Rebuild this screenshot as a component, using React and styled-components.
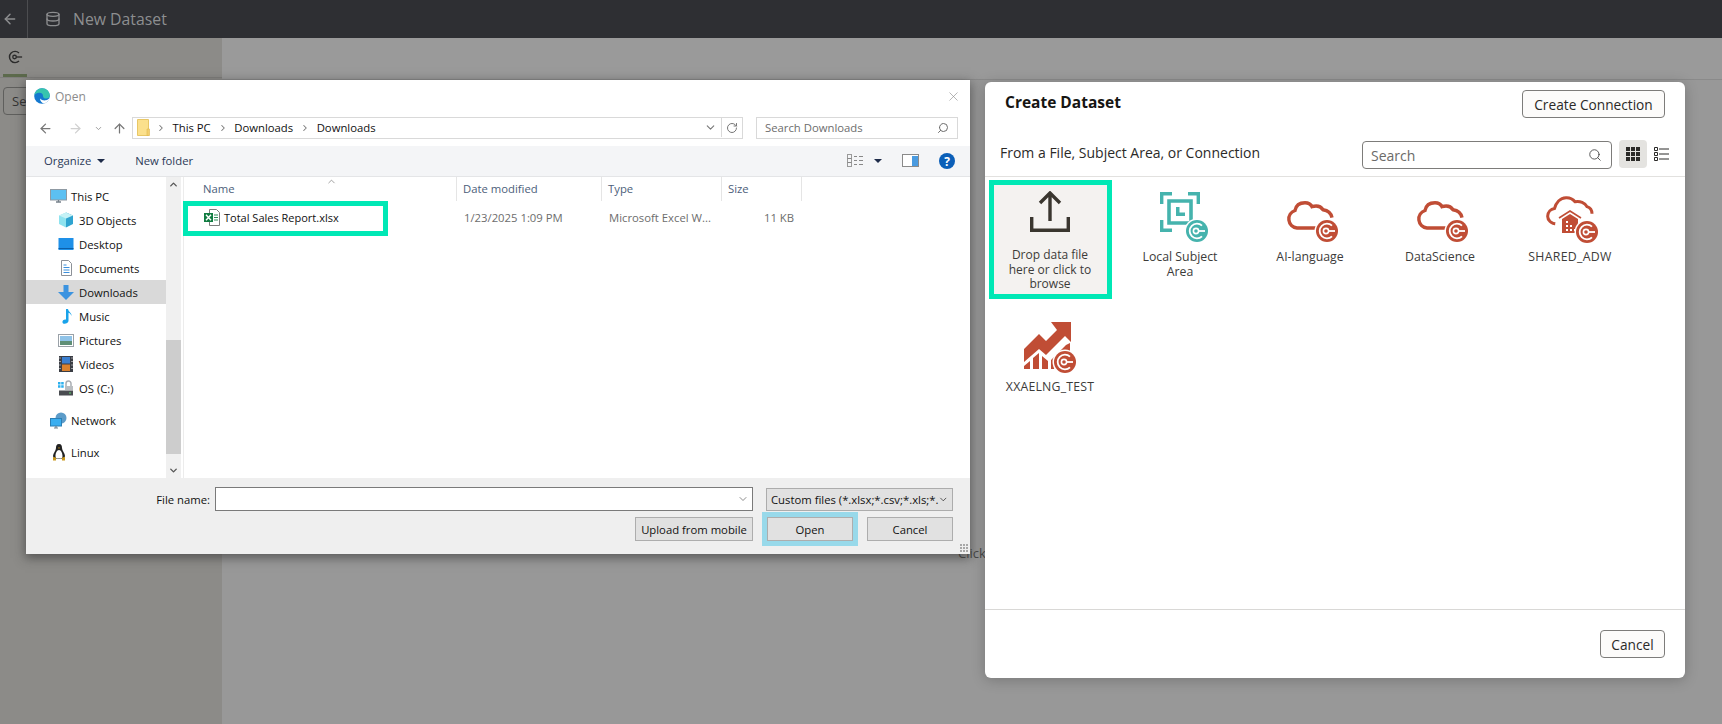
import React from "react";
import styled, { createGlobalStyle } from "styled-components";
import { ArrowLeft, Database, Search, ChevronDown, ChevronUp, ChevronRight, ArrowRight, ArrowUp, RotateCw, X } from "lucide-react";

const GlobalStyle = createGlobalStyle`
  html, body { margin: 0; padding: 0; height: 100%; }
  body { background: #989898; font-family: "Open Sans", "Liberation Sans", sans-serif; overflow: hidden; }
`;

const Page = styled.div`
  position: relative;
  width: 1722px;
  height: 724px;
  overflow: hidden;
  display: flex;
  flex-direction: column;
`;

/* app behind the dim layer */
const TopBar = styled.header`
  height: 38px;
  background: #2e2f33;
  display: flex;
  align-items: center;
  color: #8d8e90;
`;

const BackCell = styled.div`
  width: 28px;
  height: 38px;
  box-sizing: border-box;
  padding-right: 7px;
  border-right: 1px solid #4c4d50;
  display: flex;
  align-items: center;
  justify-content: center;
`;

const TopTitle = styled.div`
  display: flex;
  align-items: center;
  gap: 12px;
  margin-left: 17px;
  font-size: 15.8px;
`;

const Body = styled.div`
  flex: 1;
  display: flex;
`;

const LeftPane = styled.aside`
  width: 222px;
  box-sizing: border-box;
  background: #8c8b88;
`;

const TabStrip = styled.div`
  padding-left: 3px;
  border-bottom: 1px solid #7f7e7c;
`;

const TabCell = styled.div`
  width: 24px;
  height: 39px;
  border-bottom: 3px solid #5c6a4c;
  display: flex;
  align-items: center;
  justify-content: center;
  color: #2b2b2b;
  padding-top: 1px;
  box-sizing: border-box;
`;

const SearchStub = styled.div`
  margin: 9px 0 0 3px;
  width: 60px;
  height: 28px;
  border: 1px solid #5f5f5d;
  border-radius: 4px;
  box-sizing: border-box;
  font-size: 13px;
  line-height: 26px;
  padding-left: 8px;
  color: #333;
`;

const MainPane = styled.main`
  flex: 1;
  position: relative;
  background: #989898;
`;

const MainStrip = styled.div`
  height: 41px;
  background: #9a9a9a;
  border-bottom: 1px solid #8a8a8a;
`;

const HiddenHint = styled.span`
  position: absolute;
  left: 736px;
  top: 506px;
  font-size: 13px;
  color: #4a4a4a;
`;

/* windows file picker */
const FileDialog = styled.section`
  position: absolute;
  left: 26px;
  top: 80px;
  width: 944px;
  height: 474px;
  background: #fff;
  box-shadow: 0 3px 10px 1px rgba(40, 40, 40, 0.55);
  display: flex;
  flex-direction: column;
  font-size: 11.3px;
  color: #111;
`;

const TitleRow = styled.div`
  height: 37px;
  display: flex;
  align-items: center;
  padding: 0 9px 5px 8px;
  gap: 5px;
  color: #8c8c8c;
  font-size: 12px;
  box-sizing: border-box;
`;

const CloseBox = styled.div`
  margin-left: auto;
  color: #8a8a8a;
  display: flex;
`;

const NavRow = styled.div`
  height: 29px;
  display: flex;
  align-items: flex-start;
  padding-left: 4px;
  color: #777;
`;

const NavCell = styled.div`
  width: ${(p) => p.$w}px;
  height: 22px;
  display: flex;
  align-items: center;
  justify-content: center;
`;

const AddressBox = styled.div`
  width: 611px;
  height: 22px;
  box-sizing: border-box;
  border: 1px solid #d9d9d9;
  display: flex;
  align-items: center;
  padding: 0 0 1px 4px;
`;

const Crumb = styled.span`
  color: #111;
  margin: 0 7px 0 6.5px;
`;

const AddrEnd = styled.div`
  margin-left: auto;
  display: flex;
  align-items: center;
  height: 100%;
  color: #777;
`;

const RefreshCell = styled.div`
  width: 20px;
  height: 100%;
  border-left: 1px solid #d9d9d9;
  margin-left: 4px;
  display: flex;
  align-items: center;
  justify-content: center;
`;

const SearchFiles = styled.div`
  width: 202px;
  height: 22px;
  box-sizing: border-box;
  margin-left: 13px;
  border: 1px solid #d9d9d9;
  display: flex;
  align-items: center;
  justify-content: space-between;
  padding: 0 8px 1px;
  color: #6d6d6d;
`;

const Toolbar = styled.div`
  height: 31px;
  background: #f4f5f7;
  border-bottom: 1px solid #e4e5e7;
  box-sizing: border-box;
  display: flex;
  align-items: center;
  padding: 0 15px 1px 18px;
  color: #2c3a57;
`;

const ToolLabel = styled.span`
  display: flex;
  align-items: center;
  gap: 6px;
  margin-right: 30px;
`;

const Caret = styled.i`
  width: 0;
  height: 0;
  margin-left: ${(p) => p.$ml || 0}px;
  border-left: 4px solid transparent;
  border-right: 4px solid transparent;
  border-top: 4px solid #1f2c4a;
`;

const ToolIcons = styled.div`
  margin-left: auto;
  display: flex;
  align-items: center;
  gap: 20px;
`;

const ViewMenu = styled.div`
  display: flex;
  align-items: center;
`;

const Browser = styled.div`
  flex: 1;
  display: flex;
  min-height: 0;
`;

const NavTree = styled.nav`
  width: 140px;
  padding-top: 7px;
  box-sizing: border-box;
`;

const TreeRow = styled.div`
  height: 24px;
  display: flex;
  align-items: center;
  gap: ${(p) => (p.$root ? 4 : 5)}px;
  padding-left: ${(p) => (p.$root ? 24 : 32)}px;
  margin-top: ${(p) => p.$gap || 0}px;
  background: ${(p) => (p.$active ? "#d9d9d9" : "transparent")};
`;

const TreeGlyph = styled.span`
  width: ${(p) => (p.$root ? 17 : 16)}px;
  display: flex;
  justify-content: center;
`;

const TreeScroll = styled.div`
  width: 15px;
  background: #f0f0f0;
  display: flex;
  flex-direction: column;
  align-items: center;
  color: #555;
  padding: 2px 0;
  box-sizing: border-box;
`;

const ScrollGap = styled.div`
  flex: 1;
  width: 100%;
  display: flex;
  flex-direction: column;
  justify-content: flex-end;
  margin: 0 0 1px;
`;

const ScrollThumb = styled.div`
  height: 114px;
  background: #cdcdcd;
  margin-bottom: 10px;
`;

const FilePane = styled.div`
  flex: 1;
  margin-left: 2px;
  border-left: 1px solid #ececec;
  position: relative;
`;

const SortMark = styled.div`
  position: absolute;
  left: 142px;
  top: -1px;
  color: #777;
  display: flex;
`;

const ColumnRow = styled.div`
  display: grid;
  grid-template-columns: 273px 145px 120px 80px;
  height: 24px;
  margin-bottom: 1px;
`;

const ColumnHead = styled.div`
  border-right: 1px solid #e5e5e5;
  color: #4c607a;
  padding-left: ${(p) => p.$pad || 6}px;
  line-height: 23px;
`;

const FileRow = styled.div`
  display: grid;
  grid-template-columns: 273px 145px 120px 72px;
  height: 24px;
  margin-top: 4px;
  align-items: center;
  color: #6d6d6d;
`;

const FileCell = styled.div`
  padding-left: 7px;
  white-space: nowrap;
  text-align: ${(p) => p.$align || "left"};
`;

const FileNameCell = styled.div`
  display: flex;
  align-items: center;
  gap: 3px;
  padding-left: 20px;
  font-size: 11px;
  color: #111;
`;

const Callout = styled.div`
  position: absolute;
  left: -1px;
  top: 24px;
  width: 205px;
  height: 35px;
  box-sizing: border-box;
  border: 5px solid #00e8b5;
`;

const FormArea = styled.div`
  height: 76px;
  background: #efefef;
  display: flex;
  flex-direction: column;
  align-items: flex-end;
  padding: 9px 17px 0 0;
  box-sizing: border-box;
`;

const FormRow = styled.div`
  display: flex;
  align-items: center;
  height: 24px;
  margin-bottom: 6px;
`;

const FieldLabel = styled.label`
  margin-right: 5px;
`;

const NameInput = styled.div`
  width: 538px;
  height: 24px;
  box-sizing: border-box;
  border: 1px solid #7a7a7a;
  background: #fff;
  display: flex;
  align-items: center;
  justify-content: flex-end;
  padding-right: 3px;
  color: #666;
`;

const TypeSelect = styled.div`
  width: 187px;
  height: 23px;
  box-sizing: border-box;
  margin-left: 13px;
  border: 1px solid #acacac;
  background: #e1e1e1;
  display: flex;
  align-items: center;
  justify-content: space-between;
  padding: 0 3px 0 4px;
  white-space: nowrap;
  overflow: hidden;
  color: #111;
`;

const WinButton = styled.button`
  font: inherit;
  color: #111;
  width: ${(p) => p.$w || 86}px;
  height: 24px;
  padding: 0;
  margin: 0 0 0 ${(p) => p.$ml || 0}px;
  border: 1px solid #adadad;
  background: #e1e1e1;
  box-sizing: border-box;
  position: relative;
  ${(p) => p.$marked && "outline: 5px solid #98d9ea;"}
`;

const Grip = styled.div`
  position: absolute;
  right: 1px;
  bottom: 1px;
  width: 9px;
  height: 9px;
  background: radial-gradient(circle at 1px 1px, #a8a8a8 1px, transparent 1.2px) 0 0 / 3px 3px;
`;

/* create dataset panel */
const DatasetPanel = styled.section`
  position: absolute;
  left: 985px;
  top: 82px;
  width: 700px;
  height: 596px;
  background: #fff;
  border-radius: 6px;
  box-shadow: 0 2px 14px rgba(0, 0, 0, 0.22);
  display: flex;
  flex-direction: column;
  color: #2b2a28;
`;

const PanelHead = styled.div`
  display: flex;
  justify-content: space-between;
  align-items: flex-start;
  padding: 8px 20px 0 20px;
  height: 47px;
  box-sizing: border-box;
`;

const PanelTitle = styled.h2`
  margin: 0;
  font-size: 15.5px;
  line-height: 24px;
  font-weight: 700;
  color: #161513;
`;

const OutlineButton = styled.button`
  font: inherit;
  font-size: 13.7px;
  color: #2b2a28;
  background: #fcfbfa;
  border: 1px solid #7d7c7a;
  border-radius: 4px;
  height: 28px;
  width: ${(p) => p.$w}px;
  padding: 0;
`;

const FilterRow = styled.div`
  height: 48px;
  border-bottom: 1px solid #e2e1df;
  box-sizing: border-box;
  display: flex;
  align-items: flex-start;
  padding: 12px 10px 0 15px;
  font-size: 14px;
`;

const FilterText = styled.span`
  line-height: 24px;
  margin-right: auto;
`;

const SearchField = styled.div`
  width: 250px;
  height: 28px;
  box-sizing: border-box;
  border: 1px solid #7d7c7a;
  border-radius: 4px;
  display: flex;
  align-items: center;
  justify-content: space-between;
  padding: 0 9px 0 8px;
  color: #6b6a68;
`;

const ViewToggle = styled.div`
  width: 28px;
  height: 28px;
  margin-left: ${(p) => (p.$on ? 7 : 0)}px;
  margin-top: -1px;
  border-radius: 4px;
  background: ${(p) => (p.$on ? "#e4e3e0" : "transparent")};
  display: flex;
  align-items: center;
  justify-content: center;
`;

const TileGrid = styled.div`
  flex: 1;
  display: grid;
  grid-template-columns: repeat(5, 130px);
  grid-auto-rows: 130px;
  align-content: start;
  padding-top: 3px;
`;

const Tile = styled.div`
  display: flex;
  flex-direction: column;
  align-items: center;
  font-size: 12.3px;
  line-height: 14.5px;
  text-align: center;
  color: #3c3b39;
  padding: ${(p) => p.$top || 12}px 20px 0;
  box-sizing: border-box;
  svg { flex: none; }
`;

const DropTile = styled(Tile)`
  width: 123px;
  height: 119px;
  margin: 0 auto;
  padding: 6px 8px 0;
  font-size: 12px;
  background: #f4f2f0;
  border: 5px solid #00e8b5;
`;

const TileLabel = styled.span`
  margin-top: ${(p) => p.$mt || 7}px;
  white-space: ${(p) => (p.$wrap ? "normal" : "nowrap")};
  letter-spacing: ${(p) => p.$track || 0}px;
`;

const PanelFoot = styled.div`
  height: 69px;
  border-top: 1px solid #d9d8d6;
  box-sizing: border-box;
  display: flex;
  justify-content: flex-end;
  padding: 20px 20px 0 0;
`;

const Plug = ({ x, y, color }) => (
  <g transform={`translate(${x} ${y})`}>
    <circle r="11" fill={color} />
    <path d="M5 -5.3A7.3 7.3 0 1 0 5 5.3" fill="none" stroke="#fff" strokeWidth="1.8" />
    <circle r="2.6" cx="-1" fill="none" stroke="#fff" strokeWidth="1.6" />
    <path d="M1.500 0H8" stroke="#fff" strokeWidth="1.8" />
  </g>
);

const RED = "#c04d35";
const TEAL = "#45b3ad";

const CloudIcon = () => (
  <svg width="58" height="42" viewBox="-5 0 58 42">
    <path d="M30 27H11a9 9 0 0 1-2-17.500C10 4 14 1.700 19 1.700c4 0 6 2 7 4 5-1.500 9 0 11 3 4 .5 8 3 9 8" fill="none" stroke={RED} strokeWidth="3.4" />
    <circle cx="41" cy="30" r="12.500" fill="#fff" />
    <Plug x={41} y={30} color={RED} />
  </svg>
);

const WarehouseCloudIcon = () => (
  <svg width="58" height="47" viewBox="-5 0 58 47">
    <path d="M11 28C5 28 1.500 24 1.700 20c.2-4 3-7 6.800-7.500C10 7 14 2 20 1.700c4-.2 7 1.500 9 4 5-1 10 1 12 5 3 1 5 3 5 7" fill="none" stroke={RED} strokeWidth="3" />
    <circle cx="24" cy="30" r="15" fill="#fff" />
    <path d="M13 22l11-7 11 7" fill="none" stroke={RED} strokeWidth="1.600" />
    <path d="M16 23l8-5 8 5v14H16z" fill={RED} />
    <path d="M20 25h2v2h-2zM20 29h2v2h-2zM24 29h2v2h-2zM20 33h2v2h-2zM24 33h2v2h-2zM28 33h2v2h-2z" fill="#fff" />
    <circle cx="41" cy="36" r="12.500" fill="#fff" />
    <Plug x={41} y={36} color={RED} />
  </svg>
);

const SubjectIcon = () => (
  <svg width="56" height="50" viewBox="-8 0 56 50">
    <path d="M12 1.700H1.700V12M28 1.700H38.300V12M1.700 28V38.300H12" fill="none" stroke={TEAL} strokeWidth="3.4" />
    <path d="M9 9H31V31H9z" fill="none" stroke={TEAL} strokeWidth="3.600" />
    <path d="M16 15h3.500v5.500H25V24H16z" fill={TEAL} />
    <circle cx="37" cy="39" r="12.500" fill="#fff" />
    <Plug x={37} y={39} color={TEAL} />
  </svg>
);

const ChartIcon = () => (
  <svg width="54" height="51" viewBox="-1 0 54 51">
    <path d="M0 27L15 12l7 7L33 8 27 0H47V20l-6-6L22 33l-7-6L0 40z" fill={RED} />
    <path d="M0 47V44l6-5v8zM9 47V36l6-5v16zM18 47V34l6 5v8zM27 47V38l15-15 4-2V30H36L30 47z" fill={RED} />
    <circle cx="41" cy="40" r="12.500" fill="#fff" />
    <Plug x={41} y={40} color={RED} />
  </svg>
);

const ConnTabIcon = () => (
  <svg width="16" height="16" viewBox="-9 -9 18 18">
    <path d="M4.500 -4.500A6.300 6.300 0 1 0 4.500 4.500" fill="none" stroke="currentColor" strokeWidth="1.600" />
    <circle r="2" cx="-.5" fill="none" stroke="currentColor" strokeWidth="1.500" />
    <path d="M1.500 0H8" stroke="currentColor" strokeWidth="1.500" />
  </svg>
);

const EdgeIcon = () => (
  <svg width="16" height="16" viewBox="0 0 16 16">
    <circle cx="8" cy="8" r="7.800" fill="#1478cf" />
    <path d="M.4 7C1.200 3 4.500 .2 8 .2c4.500 0 7.800 3.500 7.800 7 0 2-1.500 3.300-3.500 3.300-2 0-3.300-1-3.300-2.600C9 5.500 7 4.400 5 4.700 3 5 1.200 5.700.4 7z" fill="#37c4ae" />
    <path d="M15.800 9.500c-.6 2.800-2.700 5.200-5.500 6-2.500-.3-4.300-2.500-4.300-5 1.300 1.400 3.500 2.200 5.800 1.800 1.800-.3 3.200-1.300 4-2.800z" fill="#fff" />
  </svg>
);

const FolderIcon = () => (
  <svg width="13" height="17" viewBox="0 0 13 17">
    <path d="M.5 .5H11.500V16.500H.5z" fill="#fbe08c" stroke="#e8c766" />
    <path d="M10 10h2.500v6.500H10z" fill="#f3cf6e" stroke="#dfb84f" strokeWidth=".6" />
  </svg>
);

const ExcelIcon = () => (
  <svg width="17" height="17" viewBox="0 0 17 17">
    <path d="M5.500 .5h7l3 3v13h-10z" fill="#fff" stroke="#7d7d7d" />
    <path d="M10 6h4M10 8.500h4M10 11h4" stroke="#2e8b57" strokeWidth="1.100" />
    <rect x="0" y="4" width="9" height="9" fill="#107c41" />
    <path d="M2 5.800L7 11.200M7 5.800L2 11.200" stroke="#fff" strokeWidth="1.400" />
  </svg>
);

const treeIcons = {
  pc: (
    <svg width="17" height="17" viewBox="0 0 17 17">
      <rect x=".5" y="1.500" width="16" height="10.500" fill="#5cc0f2" stroke="#8f9aa3" />
      <path d="M6 14h5M8.500 12v2" stroke="#75808a" strokeWidth="1.300" />
    </svg>
  ),
  cube: (
    <svg width="16" height="16" viewBox="0 0 16 16">
      <path d="M8 .5L15 3.500V12L8 15.500z" fill="#2fa4d0" />
      <path d="M8 .5L1 3.500V12L8 15.500z" fill="#8fe3ef" />
      <path d="M1 3.500L8 6.500 15 3.500 8 .5z" fill="#c5f2f6" />
    </svg>
  ),
  desktop: (
    <svg width="16" height="16" viewBox="0 0 16 16">
      <rect x=".5" y="2" width="15" height="12" fill="#1e90e8" />
      <path d="M.5 12.500h15" stroke="#0c5ea8" />
    </svg>
  ),
  docs: (
    <svg width="15" height="16" viewBox="0 0 15 16">
      <path d="M2.500 .5h7l3 3V15.500h-10z" fill="#fff" stroke="#8c9198" />
      <path d="M4.500 5h3M4.500 7.500h6M4.500 10h6M4.500 12.500h6" stroke="#3a8fdc" />
    </svg>
  ),
  down: (
    <svg width="16" height="17" viewBox="0 0 16 17">
      <path d="M5.500 1h5v7H16l-8 8-8-8h5.500z" fill="#3b93e0" />
    </svg>
  ),
  music: (
    <svg width="15" height="17" viewBox="0 0 15 17">
      <path d="M7 1h2c.5 3 4 4 3.500 7-.5-2-2-3-3-3.300V13c0 2.500-5.500 4-6 1.500C3 12 5.500 11 7 11.500z" fill="#19a3ea" />
    </svg>
  ),
  pics: (
    <svg width="16" height="13" viewBox="0 0 16 13">
      <rect x=".5" y=".5" width="15" height="12" fill="#fff" stroke="#9aa1a8" />
      <rect x="2" y="2" width="12" height="5" fill="#8fc3e8" />
      <rect x="2" y="7" width="12" height="4" fill="#5f8f76" />
    </svg>
  ),
  video: (
    <svg width="14" height="16" viewBox="0 0 14 16">
      <rect width="14" height="16" fill="#3a3d44" />
      <rect x="3" y="1" width="8" height="6.500" fill="#3b7fd0" />
      <rect x="3" y="8.500" width="8" height="6.500" fill="#d9812e" />
      <path d="M1 1.500v1M1 5v1M1 8.500v1M1 12v1M13 1.500v1M13 5v1M13 8.500v1M13 12v1" stroke="#fff" />
    </svg>
  ),
  os: (
    <svg width="16" height="16" viewBox="0 0 16 16">
      <path d="M0 2h2.500v2.500H0zM3.200 2h2.500v2.500H3.200zM0 5.200h2.500v2.500H0zM3.200 5.200h2.500v2.500H3.200z" fill="#2cb0ee" />
      <path d="M8 7V3.500a2.500 2.500 0 0 1 5 0V7" fill="none" stroke="#a8adb2" strokeWidth="1.500" />
      <rect x="7" y="6" width="8" height="4" fill="#b9bdc1" />
      <rect x="1" y="10.500" width="14" height="5" fill="#494c50" />
      <rect x="11" y="12.500" width="2" height="1" fill="#5ad16a" />
    </svg>
  ),
  net: (
    <svg width="17" height="17" viewBox="0 0 17 17">
      <circle cx="11" cy="6" r="5.500" fill="#5d9cc9" />
      <rect x=".5" y="6.500" width="11" height="7.500" fill="#3aaef0" stroke="#2b7fb5" />
      <path d="M4 16h4M6 14v2" stroke="#72808a" strokeWidth="1.200" />
    </svg>
  ),
  linux: (
    <svg width="14" height="17" viewBox="0 0 14 17">
      <path d="M7 0c2.500 0 3 2 3 4 0 3 3 5 3 8 0 2-2 3-6 3s-6-1-6-3c0-3 3-5 3-8 0-2 .5-4 3-4z" fill="#222" />
      <path d="M7 6c2 0 3.500 3 3.500 6S9 14.500 7 14.500 3.500 15 3.500 12 5 6 7 6z" fill="#fff" />
      <path d="M1 13l3 .5v3H1zM13 13l-3 .5v3h3zM6 3.500h2L7 5z" fill="#c9971c" />
    </svg>
  ),
};

const tree = [
  { key: "pc", label: "This PC", root: true },
  { key: "cube", label: "3D Objects" },
  { key: "desktop", label: "Desktop" },
  { key: "docs", label: "Documents" },
  { key: "down", label: "Downloads", active: true },
  { key: "music", label: "Music" },
  { key: "pics", label: "Pictures" },
  { key: "video", label: "Videos" },
  { key: "os", label: "OS (C:)" },
  { key: "net", label: "Network", root: true, gap: 8 },
  { key: "linux", label: "Linux", root: true, gap: 8 },
];

const FileOpenDialog = () => (
  <FileDialog>
    <TitleRow>
      <EdgeIcon />
      Open
      <CloseBox>
        <X size={15} strokeWidth={1} />
      </CloseBox>
    </TitleRow>
    <NavRow>
      <NavCell $w={30}>
        <ArrowLeft size={15} strokeWidth={2} />
      </NavCell>
      <NavCell $w={30}>
        <ArrowRight size={15} strokeWidth={2} color="#d0d0d0" />
      </NavCell>
      <NavCell $w={16}>
        <ChevronDown size={9} strokeWidth={2.5} color="#999" />
      </NavCell>
      <NavCell $w={26}>
        <ArrowUp size={15} strokeWidth={2} />
      </NavCell>
      <AddressBox>
        <FolderIcon />
        <ChevronRight size={10} strokeWidth={2.5} style={{ marginLeft: 6 }} />
        <Crumb>This PC</Crumb>
        <ChevronRight size={10} strokeWidth={2.5} />
        <Crumb>Downloads</Crumb>
        <ChevronRight size={10} strokeWidth={2.5} />
        <Crumb>Downloads</Crumb>
        <AddrEnd>
          <ChevronDown size={13} strokeWidth={2} />
          <RefreshCell>
            <RotateCw size={12} strokeWidth={2} />
          </RefreshCell>
        </AddrEnd>
      </AddressBox>
      <SearchFiles>
        Search Downloads
        <Search size={12} strokeWidth={2} style={{ transform: "scaleX(-1)" }} />
      </SearchFiles>
    </NavRow>
    <Toolbar>
      <ToolLabel>
        Organize <Caret />
      </ToolLabel>
      <ToolLabel>New folder</ToolLabel>
      <ToolIcons>
        <ViewMenu>
          <svg width="17" height="13" viewBox="0 0 17 13">
            <rect x=".5" y=".5" width="4" height="12" fill="none" stroke="#9a9a9a" />
            <path d="M.5 4.500h4M.5 8.500h4M7 2.500h3M12 2.500h4M7 6.500h3M12 6.500h4M7 10.500h3M12 10.500h4" stroke="#888" />
          </svg>
          <Caret $ml={10} />
        </ViewMenu>
        <svg width="17" height="13" viewBox="0 0 17 13">
          <rect x=".5" y=".5" width="16" height="12" fill="#fff" stroke="#8a8a8a" />
          <rect x="10" y="2" width="6" height="10" fill="#4a9be0" />
        </svg>
        <svg width="16" height="16" viewBox="0 0 16 16">
          <circle cx="8" cy="8" r="8" fill="#0b5fb8" />
          <text x="8" y="12.500" fontSize="12" fontWeight="700" fill="#fff" textAnchor="middle" fontFamily="Open Sans, sans-serif">?</text>
        </svg>
      </ToolIcons>
    </Toolbar>
    <Browser>
      <NavTree>
        {tree.map((item) => (
          <TreeRow key={item.key} $root={item.root} $gap={item.gap} $active={item.active}>
            <TreeGlyph $root={item.root}>{treeIcons[item.key]}</TreeGlyph>
            {item.label}
          </TreeRow>
        ))}
      </NavTree>
      <TreeScroll>
        <ChevronUp size={11} strokeWidth={3} />
        <ScrollGap>
          <ScrollThumb />
        </ScrollGap>
        <ChevronDown size={11} strokeWidth={3} />
      </TreeScroll>
      <FilePane>
        <SortMark>
          <ChevronUp size={11} strokeWidth={1.5} />
        </SortMark>
        <ColumnRow>
          <ColumnHead $pad={19}>Name</ColumnHead>
          <ColumnHead>Date modified</ColumnHead>
          <ColumnHead>Type</ColumnHead>
          <ColumnHead>Size</ColumnHead>
        </ColumnRow>
        <Callout />
        <FileRow>
          <FileNameCell>
            <ExcelIcon />
            Total Sales Report.xlsx
          </FileNameCell>
          <FileCell>1/23/2025 1:09 PM</FileCell>
          <FileCell>Microsoft Excel W...</FileCell>
          <FileCell $align="right">11 KB</FileCell>
        </FileRow>
      </FilePane>
    </Browser>
    <FormArea>
      <FormRow>
        <FieldLabel>File name:</FieldLabel>
        <NameInput>
          <ChevronDown size={12} strokeWidth={1.5} />
        </NameInput>
        <TypeSelect>
          Custom files (*.xlsx;*.csv;*.xls;*.
          <ChevronDown size={11} strokeWidth={1.5} />
        </TypeSelect>
      </FormRow>
      <FormRow>
        <WinButton $w={118}>Upload from mobile</WinButton>
        <WinButton $w={86} $ml={14} $marked>Open</WinButton>
        <WinButton $w={86} $ml={14}>Cancel</WinButton>
      </FormRow>
    </FormArea>
    <Grip />
  </FileDialog>
);

const CreateDatasetPanel = () => (
  <DatasetPanel>
    <PanelHead>
      <PanelTitle>Create Dataset</PanelTitle>
      <OutlineButton $w={143}>Create Connection</OutlineButton>
    </PanelHead>
    <FilterRow>
      <FilterText>From a File, Subject Area, or Connection</FilterText>
      <SearchField>
        Search
        <Search size={14} strokeWidth={1.5} color="#444" />
      </SearchField>
      <ViewToggle $on>
        <svg width="14" height="14" viewBox="0 0 14 14" fill="#2b2a28">
          <path d="M0 0h4v4H0zM5 0h4v4H5zM10 0h4v4h-4zM0 5h4v4H0zM5 5h4v4H5zM10 5h4v4h-4zM0 10h4v4H0zM5 10h4v4H5zM10 10h4v4h-4z" />
        </svg>
      </ViewToggle>
      <ViewToggle>
        <svg width="15" height="14" viewBox="0 0 15 14" fill="none" stroke="#2b2a28">
          <path d="M.5 .5h3v3h-3zM.5 5.500h3v3h-3zM.5 10.500h3v3h-3zM5 2h10M5 7h10M5 12h10" />
        </svg>
      </ViewToggle>
    </FilterRow>
    <TileGrid>
      <DropTile>
        <svg width="42" height="42" viewBox="0 0 42 42" fill="none" stroke="#3a362f" strokeWidth="3.400">
          <path d="M21 30V3M11 12L21 2 31 12M2.700 26V39.300H39.300V26" />
        </svg>
        <TileLabel $mt={15} $wrap>Drop data file here or click to browse</TileLabel>
      </DropTile>
      <Tile>
        <SubjectIcon />
        <TileLabel $mt={8} $wrap>Local Subject Area</TileLabel>
      </Tile>
      <Tile $top={21}>
        <CloudIcon />
        <TileLabel>AI-language</TileLabel>
      </Tile>
      <Tile $top={21}>
        <CloudIcon />
        <TileLabel>DataScience</TileLabel>
      </Tile>
      <Tile $top={16}>
        <WarehouseCloudIcon />
        <TileLabel $track={0.3}>SHARED_ADW</TileLabel>
      </Tile>
      <Tile>
        <ChartIcon />
        <TileLabel $track={0.2}>XXAELNG_TEST</TileLabel>
      </Tile>
    </TileGrid>
    <PanelFoot>
      <OutlineButton $w={65}>Cancel</OutlineButton>
    </PanelFoot>
  </DatasetPanel>
);

const App = () => (
  <Page>
    <GlobalStyle />
    <TopBar>
      <BackCell>
        <ArrowLeft size={16} strokeWidth={2.2} />
      </BackCell>
      <TopTitle>
        <Database size={16} strokeWidth={2} />
        New Dataset
      </TopTitle>
    </TopBar>
    <Body>
      <LeftPane>
        <TabStrip>
          <TabCell>
            <ConnTabIcon />
          </TabCell>
        </TabStrip>
        <SearchStub>Search</SearchStub>
      </LeftPane>
      <MainPane>
        <MainStrip />
        <HiddenHint>Click</HiddenHint>
      </MainPane>
    </Body>
    <FileOpenDialog />
    <CreateDatasetPanel />
  </Page>
);

export default App;
